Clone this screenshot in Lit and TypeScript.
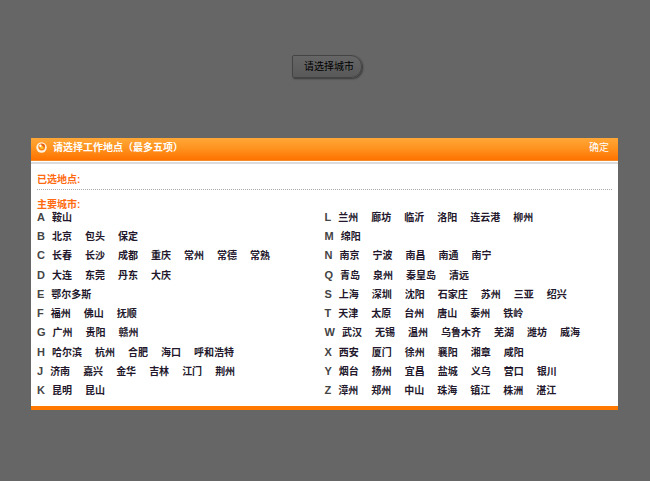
import { LitElement, html, css, svg } from "lit";
import { customElement, property, state } from "lit/decorators.js";

interface CityGroup {
  letter: string;
  cities: string[];
}

const parse = (rows: string[]): CityGroup[] =>
  rows.map((row) => {
    const [letter, ...cities] = row.split(" ");
    return { letter, cities };
  });

const COLUMNS: CityGroup[][] = [
  parse([
    "A 鞍山",
    "B 北京 包头 保定",
    "C 长春 长沙 成都 重庆 常州 常德 常熟",
    "D 大连 东莞 丹东 大庆",
    "E 鄂尔多斯",
    "F 福州 佛山 抚顺",
    "G 广州 贵阳 赣州",
    "H 哈尔滨 杭州 合肥 海口 呼和浩特",
    "J 济南 嘉兴 金华 吉林 江门 荆州",
    "K 昆明 昆山",
  ]),
  parse([
    "L 兰州 廊坊 临沂 洛阳 连云港 柳州",
    "M 绵阳",
    "N 南京 宁波 南昌 南通 南宁",
    "Q 青岛 泉州 秦皇岛 清远",
    "S 上海 深圳 沈阳 石家庄 苏州 三亚 绍兴",
    "T 天津 太原 台州 唐山 泰州 铁岭",
    "W 武汉 无锡 温州 乌鲁木齐 芜湖 潍坊 威海",
    "X 西安 厦门 徐州 襄阳 湘章 咸阳",
    "Y 烟台 扬州 宜昌 盐城 义乌 营口 银川",
    "Z 漳州 郑州 中山 珠海 镇江 株洲 湛江",
  ]),
];

const MAX_CITIES = 5;

@customElement("city-columns")
export class CityColumns extends LitElement {
  @property({ attribute: false }) columns: CityGroup[][] = [];

  static styles = css`
    :host {
      display: grid;
      grid-template-columns: 1fr 1fr;
    }
    .column {
      display: grid;
      grid-auto-rows: 1fr;
      min-height: 193px;
      margin: 0;
      padding: 0;
      list-style: none;
    }
    .row {
      display: flex;
      align-items: center;
      gap: 13px;
      white-space: nowrap;
    }
    .letter {
      margin-right: -6px;
      padding-bottom: 2px;
      font: bold 11px/16px "Liberation Sans", sans-serif;
      color: #444;
    }
    .city {
      padding: 0;
      border: 0;
      background: none;
      font: inherit;
      font-weight: bold;
      color: #23172b;
      cursor: pointer;
    }
  `;

  private pick(city: string) {
    this.dispatchEvent(new CustomEvent("pick", { detail: city }));
  }

  render() {
    return this.columns.map(
      (groups) => html`<ul class="column">
        ${groups.map(
          (group) => html`<li class="row">
            <span class="letter">${group.letter}</span>
            ${group.cities.map(
              (city) =>
                html`<button type="button" class="city" @click=${() => this.pick(city)}>${city}</button>`
            )}
          </li>`
        )}
      </ul>`
    );
  }
}

@customElement("app-root")
export class AppRoot extends LitElement {
  @state() private open = true;
  @state() private selected: string[] = [];

  static styles = css`
    :host {
      display: block;
      min-height: 100vh;
      box-sizing: border-box;
      padding-top: 55px;
      background: #fff;
      font: 10px/16px "Liberation Sans", "Noto Sans CJK SC", sans-serif;
    }
    .launch {
      display: flex;
      justify-content: center;
      padding-left: 4px;
    }
    .choose {
      padding: 3px 7px 2px 11px;
      border: 1px solid #aaa;
      border-radius: 2px 11px 11px 2px;
      background: linear-gradient(#fff, #dedede);
      box-shadow: 1px 1px 2px #888;
      font: inherit;
      color: #000;
      cursor: pointer;
    }
    .overlay {
      position: fixed;
      inset: 0;
      overflow: auto;
      padding: 138px 32px 24px 31px;
      background: rgba(0, 0, 0, 0.6);
    }
    .dialog {
      background: #fff;
      border-bottom: 4px solid #ff7800;
    }
    .header {
      display: flex;
      align-items: center;
      gap: 6px;
      height: 22px;
      padding: 0 9px 0 5px;
      border-bottom: 1px solid #f58a2a;
      background: linear-gradient(#ffa737, #ff9420 45%, #ff7200);
      color: #fff;
    }
    .icon {
      flex: none;
      width: 11px;
      height: 11px;
      margin-bottom: 4px;
    }
    .title {
      flex: 1;
      margin: 0 0 2px;
      font: inherit;
      font-weight: bold;
    }
    .confirm {
      margin-bottom: 2px;
      padding: 0;
      border: 0;
      background: none;
      font: inherit;
      color: inherit;
      cursor: pointer;
    }
    .rule {
      height: 2px;
      border-top: 1px solid #fff;
      background: #dcdcdc;
    }
    .body {
      padding: 8px 6px 5px;
    }
    .chosen {
      padding-bottom: 1px;
      border-bottom: 1px dotted #aaa;
    }
    .heading {
      margin: 0;
      font: inherit;
      font-weight: bold;
      color: #ff6a10;
    }
    .main {
      padding-top: 7px;
    }
    .list {
      margin-top: -5px;
    }
  `;

  private toggle(event: CustomEvent<string>) {
    const city = event.detail;
    if (this.selected.includes(city)) {
      this.selected = this.selected.filter((name) => name !== city);
    } else if (this.selected.length < MAX_CITIES) {
      this.selected = [...this.selected, city];
    }
  }

  private renderIcon() {
    return html`<svg class="icon" viewBox="0 0 11 11" aria-hidden="true">
      ${svg`<circle cx="5.5" cy="5.5" r="5.2" fill="#fff3e2"/>
        <circle cx="5.7" cy="5" r="3.4" fill="#f98212"/>
        <path d="M5 1.8A3.4 3.4 0 0 1 9 5L6 5Z" fill="#e5601c"/>
        <circle cx="5.8" cy="5.4" r="1.7" fill="#ffc42c"/>
        <circle cx="4.4" cy="3.8" r="1.2" fill="#fff"/>`}
    </svg>`;
  }

  render() {
    return html`
      <div class="launch">
        <button type="button" class="choose" @click=${() => (this.open = true)}>请选择城市</button>
      </div>
      ${this.open
        ? html`<div class="overlay">
            <section class="dialog" role="dialog" aria-labelledby="title">
              <header class="header">
                ${this.renderIcon()}
                <h1 class="title" id="title">请选择工作地点（最多五项）</h1>
                <button type="button" class="confirm" @click=${() => (this.open = false)}>确定</button>
              </header>
              <div class="rule"></div>
              <div class="body">
                <div class="chosen">
                  <h2 class="heading">已选地点: ${this.selected.join(" ")}</h2>
                </div>
                <div class="main">
                  <h2 class="heading">主要城市:</h2>
                  <city-columns class="list" .columns=${COLUMNS} @pick=${this.toggle}></city-columns>
                </div>
              </div>
            </section>
          </div>`
        : null}
    `;
  }
}
